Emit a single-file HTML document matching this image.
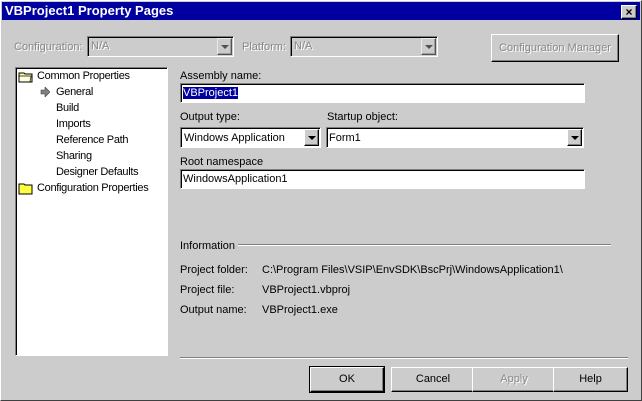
<!DOCTYPE html><html><head><style>
body{margin:0;width:642px;height:401px;background:#ccc;font-family:"Liberation Sans",sans-serif;font-size:11px;position:relative;overflow:hidden;color:#000}
.a{position:absolute;white-space:nowrap}
.win{position:absolute;left:0;top:0;width:640px;height:399px;border-top:1px solid #fff;border-left:1px solid #fff;border-right:1px solid #404040;border-bottom:1px solid #404040}
.sunk{position:absolute;background:#fff;border-top:1px solid #808080;border-left:1px solid #808080;border-right:1px solid #fff;border-bottom:1px solid #fff;box-shadow:inset 1px 1px 0 #000}
.btn{position:absolute;background:#ccc;border-top:1px solid #fff;border-left:1px solid #fff;border-right:1px solid #000;border-bottom:1px solid #000;box-shadow:inset -1px -1px 0 #808080;text-align:center;font-size:11px}
.dd{position:absolute;right:1px;top:1px;width:15px;height:17px;background:#ccc;border-top:1px solid #fff;border-left:1px solid #fff;box-shadow:inset -1px -1px 0 #808080;border-right:1px solid #000;border-bottom:1px solid #000;box-sizing:border-box}
.dd:after{content:"";position:absolute;left:3px;top:6px;border-left:4px solid transparent;border-right:4px solid transparent;border-top:4px solid #000}
.g{color:#888;text-shadow:1px 1px 0 #fff}
.t{font-size:11px}
.tr{font-size:11px;letter-spacing:-0.3px}
</style></head><body>
<div class="win"></div>
<div class="a" style="left:2px;top:2px;width:638px;height:18px;background:#0000a0"></div>
<div class="a" style="left:5px;top:3px;color:#fff;font-weight:bold;font-size:13px">VBProject1 Property Pages</div>
<div class="btn" style="left:621px;top:5px;width:14px;height:12px;line-height:12px;font-size:12px;font-weight:bold">×</div>

<div class="a g t" style="left:14px;top:41px">Configuration:</div>
<div class="sunk" style="left:87px;top:36px;width:145px;height:19px;background:#ccc"><span class="a g t" style="left:3px;top:3px">N/A</span><div class="dd" style="opacity:.6"></div></div>
<div class="a g t" style="left:242px;top:41px">Platform:</div>
<div class="sunk" style="left:290px;top:36px;width:146px;height:19px;background:#ccc"><span class="a g t" style="left:3px;top:3px">N/A</span><div class="dd" style="opacity:.6"></div></div>
<div class="btn g" style="left:491px;top:34px;width:126px;height:26px;line-height:26px">Configuration Manager</div>

<div class="sunk" style="left:15px;top:67px;width:151px;height:287px"></div>
<svg class="a" style="left:18px;top:70px" width="16" height="13"><path d="M1 3h5l1 1h7v8H1z" fill="#ffffa0" stroke="#000"/><path d="M1 6h12l-1 6H1z" fill="#fff" stroke="#000" opacity=".7"/></svg>
<div class="a tr" style="left:37px;top:70px">Common Properties</div>
<svg class="a" style="left:40px;top:87px" width="10" height="10"><path d="M1 3h4V0l5 5-5 5V7H1z" fill="#808080" stroke="#404040" stroke-width=".6"/></svg>
<div class="a tr" style="left:56px;top:86px">General</div>
<div class="a tr" style="left:56px;top:102px">Build</div>
<div class="a tr" style="left:56px;top:118px">Imports</div>
<div class="a tr" style="left:56px;top:134px">Reference Path</div>
<div class="a tr" style="left:56px;top:150px">Sharing</div>
<div class="a tr" style="left:56px;top:166px">Designer Defaults</div>
<svg class="a" style="left:18px;top:182px" width="16" height="13"><path d="M1 2h5l1 1h7v9H1z" fill="#ffff40" stroke="#000"/></svg>
<div class="a tr" style="left:37px;top:182px">Configuration Properties</div>

<div class="a t" style="left:180px;top:70px">Assembly name:</div>
<div class="sunk" style="left:180px;top:83px;width:403px;height:18px"><span class="a t" style="left:2px;top:3px;background:#0000a0;color:#fff">VBProject1</span></div>
<div class="a t" style="left:180px;top:111px">Output type:</div>
<div class="sunk" style="left:180px;top:127px;width:139px;height:19px"><span class="a t" style="left:3px;top:4px">Windows Application</span><div class="dd"></div></div>
<div class="a t" style="left:327px;top:111px">Startup object:</div>
<div class="sunk" style="left:326px;top:127px;width:256px;height:19px"><span class="a t" style="left:2px;top:4px">Form1</span><div class="dd"></div></div>
<div class="a t" style="left:180px;top:156px">Root namespace</div>
<div class="sunk" style="left:180px;top:169px;width:403px;height:18px"><span class="a t" style="left:2px;top:3px">WindowsApplication1</span></div>

<div class="a t" style="left:180px;top:240px">Information</div>
<div class="a" style="left:238px;top:244px;width:373px;height:1px;background:#808080;border-bottom:1px solid #fff"></div>
<div class="a t" style="left:180px;top:264px">Project folder:</div>
<div class="a t" style="left:262px;top:264px">C:\Program Files\VSIP\EnvSDK\BscPrj\WindowsApplication1\</div>
<div class="a t" style="left:180px;top:284px">Project file:</div>
<div class="a t" style="left:262px;top:284px">VBProject1.vbproj</div>
<div class="a t" style="left:180px;top:304px">Output name:</div>
<div class="a t" style="left:262px;top:304px">VBProject1.exe</div>

<div class="a" style="left:180px;top:357px;width:448px;height:1px;background:#808080;border-bottom:1px solid #fff"></div>
<div class="btn" style="left:310px;top:367px;width:72px;height:23px;line-height:23px;outline:1px solid #000">OK</div>
<div class="btn" style="left:391px;top:367px;width:82px;height:23px;line-height:23px">Cancel</div>
<div class="btn g" style="left:472px;top:367px;width:82px;height:23px;line-height:23px">Apply</div>
<div class="btn" style="left:553px;top:367px;width:73px;height:23px;line-height:23px">Help</div>
</body></html>
